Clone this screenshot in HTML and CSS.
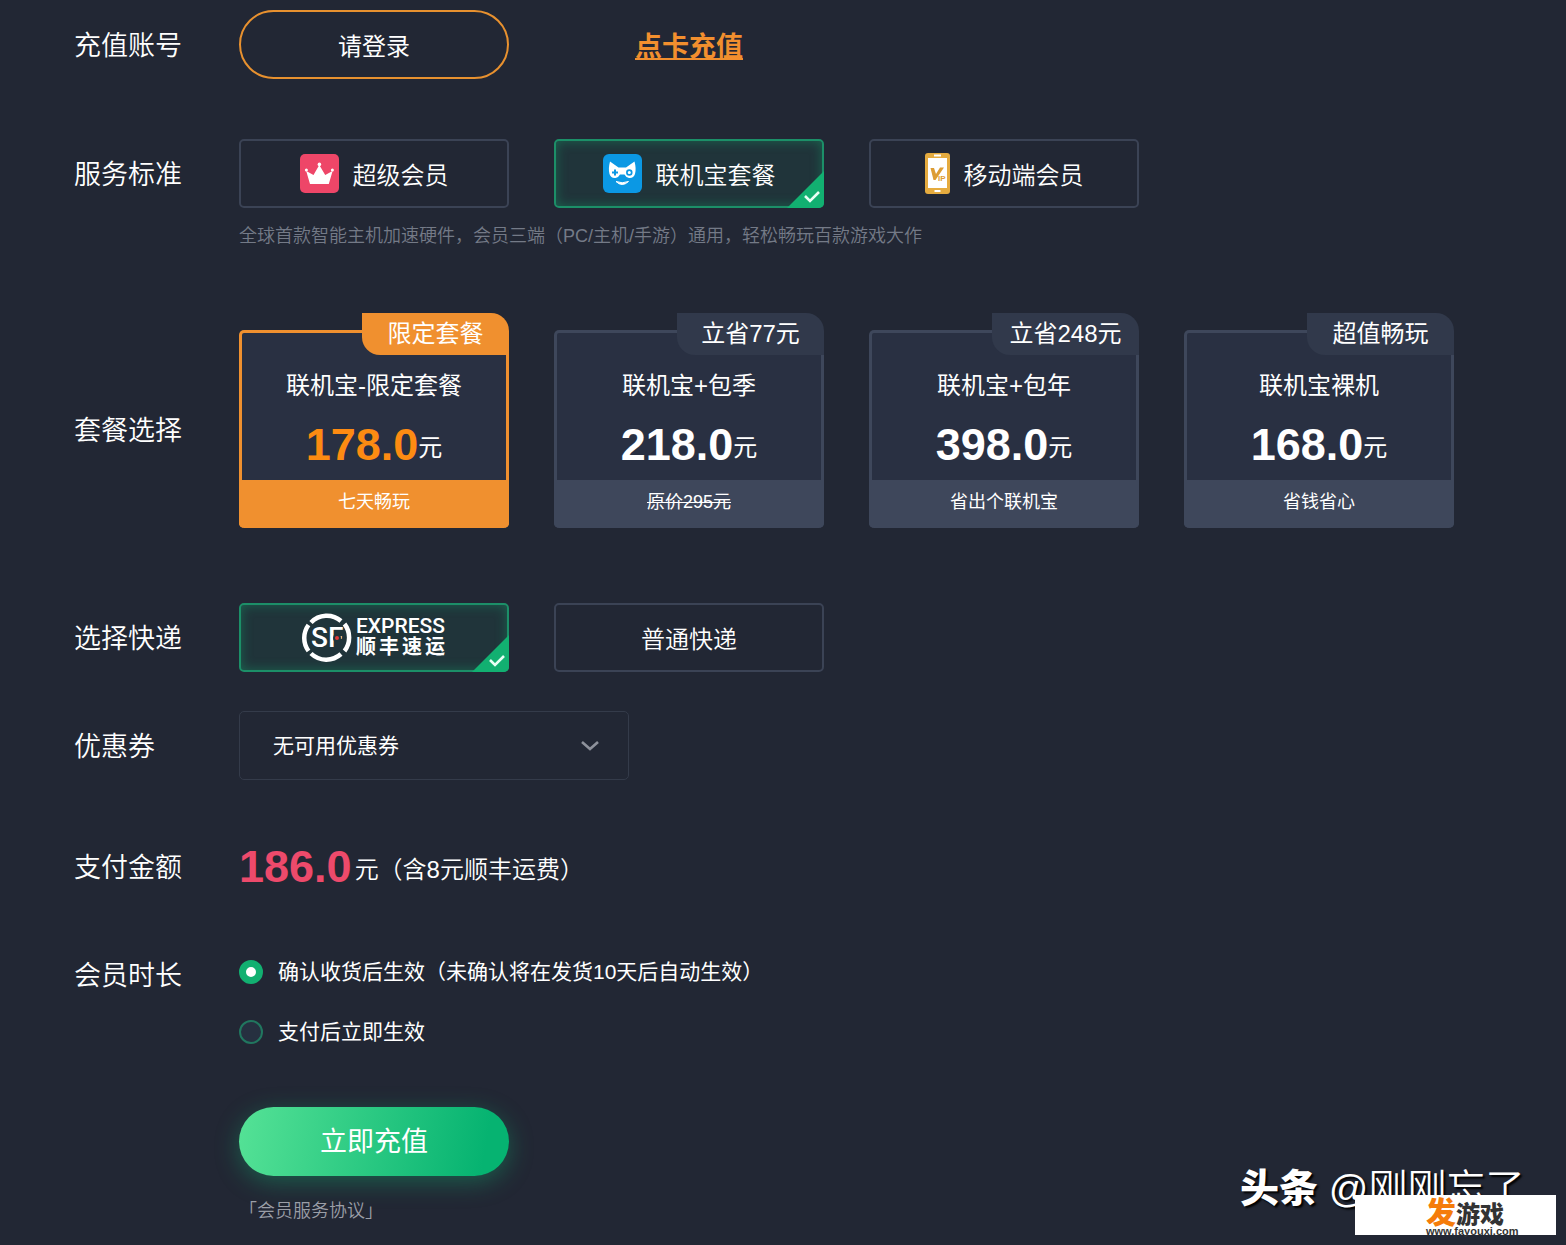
FILE: index.html
```html
<!DOCTYPE html>
<html lang="zh-CN">
<head>
    <meta charset="UTF-8">
    <meta name="viewport" content="width=device-width, initial-scale=1.0">
    <title>会员充值</title>
    <link rel="stylesheet" href="styles.css">
</head>
<body>
    <main class="recharge">
        <div class="row row-account">
            <div class="row-label">充值账号</div>
            <div class="grid">
                <button type="button" class="login-btn">请登录</button>
                <a href="#" class="card-link">点卡充值</a>
            </div>
        </div>

        <div class="row row-service">
            <div class="row-label">服务标准</div>
            <div>
                <div class="grid">
                    <button type="button" class="option">
                        <svg class="icon" viewBox="0 0 39 39" aria-hidden="true">
                            <rect width="39" height="39" rx="5" fill="#ee4668"/>
                            <path d="M10 30 L6.2 17 L13.5 21 L19.3 11 L25.2 21 L32.6 17 L28.8 30 Z" fill="#fff"/>
                            <circle cx="6.4" cy="16" r="1.5" fill="#fff"/>
                            <circle cx="19.4" cy="10.4" r="1.8" fill="#fff"/>
                            <circle cx="32.4" cy="16" r="1.5" fill="#fff"/>
                        </svg>
                        超级会员
                    </button>
                    <button type="button" class="option active">
                        <svg class="icon" viewBox="0 0 39 39" aria-hidden="true">
                            <rect width="39" height="39" rx="6" fill="#0b98e4"/>
                            <path d="M7 7.5 L15.5 13.5 H23 L31.5 7.5 Q33.5 15 32 20 Q30.5 24.5 26 24 Q23 23.5 21.5 20.5 H17 Q15.5 23.5 12.5 24 Q8 24.5 6.5 20 Q5 15 7 7.5 Z" fill="#fff"/>
                            <path d="M12 15.5 V21.5 M9 18.5 H15" stroke="#0b98e4" stroke-width="2"/>
                            <circle cx="26.3" cy="18.5" r="2.4" fill="none" stroke="#0b98e4" stroke-width="1.7"/>
                            <path d="M13 27.5 Q19.2 33.5 25.5 27.5 Q19.2 30 13 27.5 Z" fill="#fff" stroke="#fff" stroke-width="1"/>
                        </svg>
                        联机宝套餐
                        <svg class="tick" viewBox="0 0 37 37" aria-hidden="true">
                            <path d="M37 0 V37 H0 Z" fill="#12b071"/>
                            <path d="M18 25 L23 30 L32 21" fill="none" stroke="#e6fff4" stroke-width="2.6"/>
                        </svg>
                    </button>
                    <button type="button" class="option">
                        <svg class="icon-phone" viewBox="0 0 25 41" aria-hidden="true">
                            <rect width="25" height="41" rx="3" fill="#e5ab3f"/>
                            <rect x="3" y="5" width="19" height="30" fill="#fff"/>
                            <path d="M9 2.5 H16 M9.5 38 H15.5" stroke="#fff" stroke-width="2"/>
                            <path d="M5.5 15 H9 L11 21 L15 14.5 H19 L10.5 27 H8.5 Z" fill="#dd9d35"/>
                            <text x="13" y="28" class="phone-text">IP</text>
                        </svg>
                        移动端会员
                    </button>
                </div>
                <p class="hint">全球首款智能主机加速硬件，会员三端（PC/主机/手游）通用，轻松畅玩百款游戏大作</p>
            </div>
        </div>

        <div class="row row-plan">
            <div class="row-label">套餐选择</div>
            <div class="grid">
                <button type="button" class="plan selected">
                    <span class="plan-tag">限定套餐</span>
                    <span class="plan-name">联机宝-限定套餐</span>
                    <span class="money"><b>178.0</b><span>元</span></span>
                    <span class="plan-foot">七天畅玩</span>
                </button>
                <button type="button" class="plan">
                    <span class="plan-tag">立省77元</span>
                    <span class="plan-name">联机宝+包季</span>
                    <span class="money"><b>218.0</b><span>元</span></span>
                    <span class="plan-foot"><s>原价295元</s></span>
                </button>
                <button type="button" class="plan">
                    <span class="plan-tag">立省248元</span>
                    <span class="plan-name">联机宝+包年</span>
                    <span class="money"><b>398.0</b><span>元</span></span>
                    <span class="plan-foot">省出个联机宝</span>
                </button>
                <button type="button" class="plan">
                    <span class="plan-tag">超值畅玩</span>
                    <span class="plan-name">联机宝裸机</span>
                    <span class="money"><b>168.0</b><span>元</span></span>
                    <span class="plan-foot">省钱省心</span>
                </button>
            </div>
        </div>

        <div class="row row-express">
            <div class="row-label">选择快递</div>
            <div class="grid">
                <button type="button" class="option active">
                    <svg class="sf-logo" viewBox="0 0 144 50" role="img" aria-label="SF EXPRESS 顺丰速运">
                        <g fill="none" stroke="#fff" stroke-width="4.5">
                            <path d="M9 9.5 A22 22 0 0 1 39 8"/>
                            <path d="M42.5 11 A22 22 0 0 1 42.5 38"/>
                            <path d="M39 41 A22 22 0 0 1 9 40.5"/>
                            <path d="M6.5 38 A22 22 0 0 1 6.5 12"/>
                        </g>
                        <text x="9" y="34" class="sf-mark">SF</text>
                        <circle cx="35" cy="25" r="3" fill="#e23b3b" stroke="#20343a" stroke-width="2"/>
                        <text x="54" y="20" class="sf-en">EXPRESS</text>
                        <text x="54 77 100 123" y="41" class="sf-cn">顺丰速运</text>
                    </svg>
                    <svg class="tick" viewBox="0 0 37 37" aria-hidden="true">
                        <path d="M37 0 V37 H0 Z" fill="#12b071"/>
                        <path d="M18 25 L23 30 L32 21" fill="none" stroke="#e6fff4" stroke-width="2.6"/>
                    </svg>
                </button>
                <button type="button" class="option">普通快递</button>
            </div>
        </div>

        <div class="row row-coupon">
            <label class="row-label" for="coupon">优惠券</label>
            <div class="select-box">
                <select id="coupon">
                    <option>无可用优惠券</option>
                </select>
                <svg class="chevron" viewBox="0 0 20 12" aria-hidden="true">
                    <path d="M2 2 L10 9 L18 2" fill="none" stroke="#8d919b" stroke-width="2.6"/>
                </svg>
            </div>
        </div>

        <div class="row row-amount">
            <div class="row-label">支付金额</div>
            <div class="money amount"><b>186.0</b><span>元（含8元顺丰运费）</span></div>
        </div>

        <div class="row row-effect">
            <div class="row-label">会员时长</div>
            <div class="radios">
                <label class="radio"><input type="radio" name="effect" checked>确认收货后生效（未确认将在发货10天后自动生效）</label>
                <label class="radio"><input type="radio" name="effect">支付后立即生效</label>
            </div>
        </div>

        <div class="submit">
            <button type="button" class="submit-btn">立即充值</button>
            <a href="#" class="agreement">「会员服务协议」</a>
        </div>
    </main>

    <div class="watermark">
        <div class="author"><b>头条</b> @刚刚忘了</div>
        <div class="site">
            <div class="site-name"><b>发</b>游戏</div>
            <div class="site-url">www.fayouxi.com</div>
        </div>
    </div>
</body>
</html>
```
FILE: styles.css
```css
* {
    box-sizing: border-box;
}
body {
    margin: 0;
    position: relative;
    min-height: 100vh;
    background: #222734;
    color: #fff;
    font-family: "Liberation Sans", "Noto Sans CJK SC", sans-serif;
    font-size: 24px;
}
button,
select {
    font-family: inherit;
    color: inherit;
    cursor: pointer;
}
.recharge {
    padding: 10px 112px 20px 74px;
}
.row {
    display: grid;
    grid-template-columns: 165px 1fr;
}
.row-label {
    padding-top: 4px;
    font-size: 27px;
    font-weight: 350;
    line-height: 65px;
}
.grid {
    display: grid;
    grid-template-columns: repeat(4, 1fr);
    gap: 45px;
}
.row-account {
    margin-bottom: 60px;
}
.row-service {
    margin-bottom: 67px;
}
.row-plan {
    margin-bottom: 75px;
}
.row-express,
.row-amount {
    margin-bottom: 39px;
}
.row-coupon {
    margin-bottom: 52px;
}
.row-effect {
    margin-bottom: 63px;
}

/* account */
.login-btn {
    height: 69px;
    padding: 0;
    background: none;
    border: 2px solid #e8912f;
    border-radius: 35px;
    font-size: 24px;
}
.card-link {
    align-self: center;
    justify-self: center;
    color: #f28f2e;
    font-size: 27px;
    font-weight: bold;
}

/* options */
.option {
    position: relative;
    display: flex;
    align-items: center;
    justify-content: center;
    gap: 14px;
    height: 69px;
    padding: 0;
    background: none;
    border: 2px solid #3b4355;
    border-radius: 5px;
    font-size: 24px;
    font-weight: 350;
}
.option.active {
    background: #20343a;
    border-color: #1c8f68;
    box-shadow: inset 0 0 12px rgba(18, 176, 113, 0.4);
}
.icon {
    width: 39px;
    height: 39px;
}
.icon-phone {
    width: 25px;
    height: 41px;
}
.phone-text {
    font-size: 8px;
    font-weight: bold;
    fill: #dd9d35;
}
.tick {
    position: absolute;
    right: -2px;
    bottom: -2px;
    width: 37px;
    height: 37px;
    border-radius: 0 0 5px 0;
}
.hint {
    margin: 18px 0 0;
    color: #747a87;
    font-size: 18px;
    font-weight: 350;
    line-height: 20px;
}

/* price with its unit */
.money {
    display: flex;
    align-items: center;
    justify-content: center;
}
.money b {
    font-size: 45px;
    font-weight: bold;
    line-height: 48px;
}
.money span {
    padding-top: 6px;
    line-height: 36px;
}

/* plans */
.row-plan .row-label {
    align-self: center;
    padding-top: 21px;
}
.plan {
    position: relative;
    display: flex;
    flex-direction: column;
    margin-top: 17px;
    padding: 0;
    background: #293042;
    border: 3px solid #3e475b;
    border-bottom: 0;
    border-radius: 5px;
    font-size: 24px;
    text-align: center;
}
.plan-tag {
    position: absolute;
    top: -20px;
    right: -3px;
    width: 147px;
    line-height: 42px;
    background: #31394b;
    border-radius: 0 18px 0 18px;
}
.plan-name {
    padding-top: 35px;
    line-height: 36px;
}
.plan .money {
    padding: 17px 0 11px;
}
.plan-foot {
    margin: 0 -3px;
    padding-bottom: 4px;
    background: #3e475b;
    border-radius: 0 0 5px 5px;
    font-size: 18px;
    line-height: 44px;
}
.plan.selected {
    border-color: #f0902f;
}
.selected .plan-tag,
.selected .plan-foot {
    background: #f0902f;
}
.selected b {
    color: #fd8b12;
}

/* express */
.sf-logo {
    width: 144px;
    height: 50px;
}
.sf-mark,
.sf-en {
    font-family: Roboto, sans-serif;
    font-size: 21px;
    font-weight: 500;
    fill: #fff;
}
.sf-mark {
    font-size: 28px;
}
.sf-cn {
    font-family: "Noto Sans CJK SC", sans-serif;
    font-size: 20px;
    font-weight: bold;
    fill: #fff;
}

/* coupon */
.select-box {
    position: relative;
    max-width: 390px;
}
.select-box select {
    width: 100%;
    height: 69px;
    padding: 0 33px;
    appearance: none;
    background: #222734;
    border: 1px solid #343b4a;
    border-radius: 5px;
    font-size: 21px;
}
.chevron {
    position: absolute;
    top: 29px;
    right: 29px;
    width: 20px;
    height: 12px;
    pointer-events: none;
}

/* amount */
.amount {
    justify-content: flex-start;
    gap: 3px;
    font-weight: 350;
}
.amount b {
    color: #ed4a6b;
}

/* effect time */
.radios {
    display: flex;
    flex-direction: column;
    gap: 36px;
    padding-top: 20px;
}
.radio {
    display: flex;
    align-items: center;
    gap: 15px;
    font-size: 21px;
    line-height: 24px;
}
.radio input {
    appearance: none;
    width: 24px;
    height: 24px;
    margin: 0;
    background: #263040;
    border: 2px solid #21775f;
    border-radius: 50%;
}
.radio input:checked {
    background: #fff;
    border: 7px solid #12b071;
}

/* submit */
.submit {
    display: flex;
    flex-direction: column;
    align-items: flex-start;
    padding-left: 165px;
}
.submit-btn {
    width: 270px;
    height: 69px;
    padding: 0 0 4px;
    background: linear-gradient(100deg, #55e296, #06b371 90%);
    border: 0;
    border-radius: 35px;
    box-shadow: 0 6px 24px rgba(18, 176, 113, 0.4);
    font-size: 27px;
}
.agreement {
    margin-top: 23px;
    color: #9a9ea7;
    font-size: 18px;
    font-weight: 350;
    line-height: 24px;
    text-decoration: none;
}

/* watermark */
.watermark {
    position: absolute;
    right: 10px;
    bottom: 10px;
    width: 316px;
}
.author {
    margin-bottom: -22px;
    font-size: 39px;
    font-weight: 350;
    line-height: 56px;
    text-shadow: 2px 2px 2px #000;
    white-space: nowrap;
}
.author b {
    font-weight: 900;
}
.site {
    position: relative;
    width: 201px;
    height: 40px;
    margin-left: auto;
    padding-left: 71px;
    background: #fff;
    color: #333;
}
.site-name {
    height: 31px;
    font-size: 24px;
    font-weight: 900;
    line-height: 36px;
}
.site-name b {
    color: #f57c0a;
    font-size: 30px;
    font-weight: 900;
}
.site-url {
    font-size: 11px;
    font-weight: bold;
    line-height: 10px;
}
```
